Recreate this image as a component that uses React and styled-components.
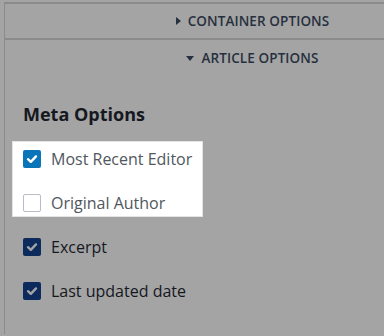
import React from 'react';
import styled, { createGlobalStyle } from 'styled-components';

const Global = createGlobalStyle`
  html, body { margin: 0; padding: 0; }
  body {
    background: #a4a4a4;
    font-family: "Open Sans", "Noto Sans", sans-serif;
    width: 384px;
    height: 336px;
    overflow: hidden;
  }
`;

const Page = styled.div`
  padding: 2px 0 0 4px;
  height: 334px;
  box-sizing: border-box;
`;

const Panel = styled.div`
  border-top: 2px solid #8b8b8b;
  border-left: 1px solid #8b8b8b;
  height: 100%;
  box-sizing: border-box;
`;

const SectionHead = styled.div`
  display: flex;
  align-items: center;
  justify-content: center;
  gap: 7px;
  height: ${(props) => props.h}px;
  padding-left: 116px;
  border-bottom: ${(props) => (props.line ? '2px solid #8b8b8b' : 'none')};
  color: #27303e;
  font-size: 13.5px;
  font-weight: 600;
  text-transform: uppercase;
  letter-spacing: 0.1px;
`;

const Caret = styled.span`
  width: 0;
  height: 0;
  ${(props) => (props.open
    ? 'border-left: 4px solid transparent; border-right: 4px solid transparent; border-top: 5px solid #27303e;'
    : 'border-top: 4px solid transparent; border-bottom: 4px solid transparent; border-left: 5px solid #27303e;')}
`;

const Body = styled.div`
  padding: 26px 0 0 18px;
`;

const Title = styled.h3`
  margin: 0 0 24px;
  font-size: 18px;
  font-weight: 700;
  color: #15181f;
  line-height: 24px;
`;

const List = styled.div`
  display: flex;
  flex-direction: column;
  gap: 26px;
  width: 171px;
`;

const Spotlight = styled.div`
  display: flex;
  flex-direction: column;
  gap: 26px;
  margin: -9px -9px -5px -11px;
  padding: 8px 8px 4px 10px;
  background: #fff;
  border: 1px solid #e2e4e7;
`;

const Item = styled.label`
  display: flex;
  align-items: center;
  gap: 10px;
  height: 18px;
  line-height: 18px;
  font-size: 16px;
  color: ${(props) => (props.lit ? '#50575e' : '#15181f')};
  white-space: nowrap;
`;

const Box = styled.span`
  display: flex;
  align-items: center;
  justify-content: center;
  width: 18px;
  height: 18px;
  box-sizing: border-box;
  border-radius: 2px;
  flex: none;
  background: ${(props) => (props.checked ? (props.lit ? '#0a74b8' : '#0c2b5c') : '#fff')};
  border: 1px solid ${(props) => (props.checked ? 'transparent' : '#b9bdc9')};
`;

const Check = ({ color }) => (
  <svg width="12" height="12" viewBox="0 0 12 12">
    <path d="M2 6.2 L4.8 8.8 L10 3.4" fill="none" stroke={color} strokeWidth="2.4" strokeLinecap="round" strokeLinejoin="round" />
  </svg>
);

const Option = ({ label, checked, lit }) => (
  <Item lit={lit}>
    <Box checked={checked} lit={lit}>
      {checked ? <Check color={lit ? '#fff' : '#a4a4a4'} /> : null}
    </Box>
    {label}
  </Item>
);

export default function App () {
  return (
    <>
      <Global />
      <Page>
        <Panel>
          <SectionHead h={34} line>
            <Caret />
            Container Options
          </SectionHead>
          <SectionHead h={36}>
            <Caret open />
            Article Options
          </SectionHead>
          <Body>
            <Title>Meta Options</Title>
            <List>
              <Spotlight>
                <Option label="Most Recent Editor" checked lit />
                <Option label="Original Author" lit />
              </Spotlight>
              <Option label="Excerpt" checked />
              <Option label="Last updated date" checked />
            </List>
          </Body>
        </Panel>
      </Page>
    </>
  );
}
